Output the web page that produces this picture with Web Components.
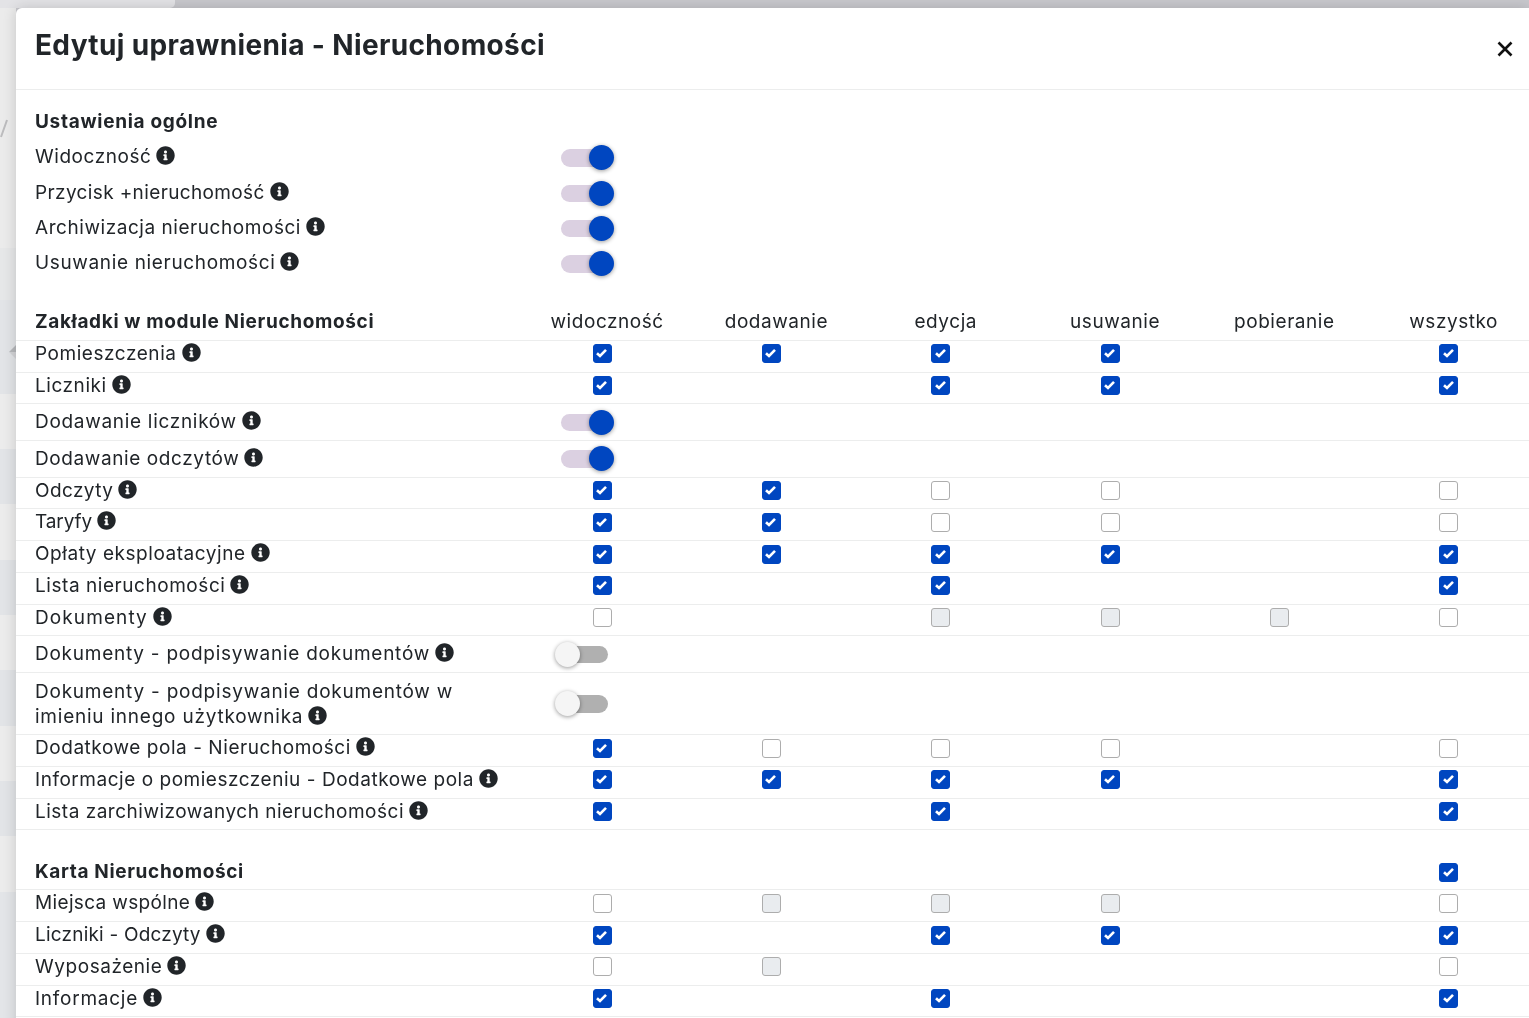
<!DOCTYPE html>
<html lang="pl">
<head>
<meta charset="utf-8">
<title>Edytuj uprawnienia</title>
<style>
  html, body { margin: 0; height: 100%; overflow: hidden; background: #c8c8cd; }
  body { font-family: Inter, "Liberation Sans", sans-serif; font-size: 19px; letter-spacing: .55px; color: #212529; }
</style>
</head>
<body>
<page-backdrop></page-backdrop>
<edit-modal>
  <span slot="title">Edytuj uprawnienia - Nieruchomości</span>

  <section-title>Ustawienia ogólne</section-title>
  <perm-row plain toggle="on">Widoczność</perm-row>
  <perm-row plain toggle="on" style="letter-spacing:.37px">Przycisk +nieruchomość</perm-row>
  <perm-row plain toggle="on">Archiwizacja nieruchomości</perm-row>
  <perm-row plain toggle="on" style="letter-spacing:.65px">Usuwanie nieruchomości</perm-row>

  <perm-row head style="margin-top:22.4px" titles="widoczność dodawanie edycja usuwanie pobieranie wszystko">Zakładki w module Nieruchomości</perm-row>
  <perm-row cells="c c c c - c">Pomieszczenia</perm-row>
  <perm-row cells="c - c c - c">Liczniki</perm-row>
  <perm-row toggle="on" style="letter-spacing:.7px">Dodawanie liczników</perm-row>
  <perm-row toggle="on" style="letter-spacing:.6px">Dodawanie odczytów</perm-row>
  <perm-row cells="c c u u - u" style="letter-spacing:.4px">Odczyty</perm-row>
  <perm-row cells="c c u u - u" style="letter-spacing:-.1px">Taryfy</perm-row>
  <perm-row cells="c c c c - c">Opłaty eksploatacyjne</perm-row>
  <perm-row cells="c - c - - c">Lista nieruchomości</perm-row>
  <perm-row cells="u - d d d u" style="letter-spacing:1.1px">Dokumenty</perm-row>
  <perm-row toggle="off" style="letter-spacing:.75px">Dokumenty - podpisywanie dokumentów</perm-row>
  <perm-row toggle="off" tall style="letter-spacing:.77px">Dokumenty - podpisywanie dokumentów w<br>imieniu innego użytkownika</perm-row>
  <perm-row cells="c u u u - u">Dodatkowe pola - Nieruchomości</perm-row>
  <perm-row cells="c c c c - c" style="letter-spacing:.53px">Informacje o pomieszczeniu - Dodatkowe pola</perm-row>
  <perm-row cells="c - c - - c" style="letter-spacing:.5px">Lista zarchiwizowanych nieruchomości</perm-row>

  <perm-row head style="margin-top:23px" cells="- - - - - c">Karta Nieruchomości</perm-row>
  <perm-row cells="u d d d - u" style="letter-spacing:.35px">Miejsca wspólne</perm-row>
  <perm-row cells="c - c c - c" style="letter-spacing:.2px">Liczniki - Odczyty</perm-row>
  <perm-row cells="u d - - - u">Wyposażenie</perm-row>
  <perm-row cells="c - c - - c" style="letter-spacing:.75px">Informacje</perm-row>
</edit-modal>

<script>
(function() {
  'use strict';

  const INFO_PATH = 'M256 8C119.043 8 8 119.083 8 256c0 136.997 111.043 248 248 248s248-111.003 248-248C504 119.083 392.957 8 256 8zm0 110c23.196 0 42 18.804 42 42s-18.804 42-42 42-42-18.804-42-42 18.804-42 42-42zm56 254c0 6.627-5.373 12-12 12h-88c-6.627 0-12-5.373-12-12v-24c0-6.627 5.373-12 12-12h12v-64h-12c-6.627 0-12-5.373-12-12v-24c0-6.627 5.373-12 12-12h64c6.627 0 12 5.373 12 12v100h12c6.627 0 12 5.373 12 12v24z';

  // the dimmed page behind the modal, only its left and top edges are visible
  customElements.define('page-backdrop', class extends HTMLElement {
    constructor() {
      super();
      this.attachShadow({mode: 'open'});
      this.shadowRoot.innerHTML = `
      <style>
      :host { position: fixed; inset: 0; display: block; overflow: hidden; }
      .bands { position: absolute; left: 0; top: 0; width: 16px; height: 100%; background: linear-gradient(#ebebeb 0 248px, #e6e7e8 248px 300px, #e2e4e7 300px 394px, #ececec 394px 449px, #e2e4e7 449px 504px, #ececec 504px 560px, #e2e4e7 560px 615px, #ececec 615px 670px, #e2e4e7 670px 726px, #ececec 726px 781px, #e2e4e7 781px 836px, #ececec 836px 892px, #e3e5e8 892px); }
      .card { position: absolute; left: 0; top: -10px; width: 175px; height: 18px; background: #e3e3e6; border-radius: 0 0 5px 0; }
      svg { position: absolute; left: 0; top: 119px; }
      .sort { position: absolute; left: 9px; top: 345px; width: 7px; height: 14px; background: linear-gradient(#b6b8bb 50%, #d2d3d6 50%); clip-path: polygon(100% 0, 0 50%, 100% 100%); }
      </style>
      <div class="bands"></div>
      <div class="card"></div>
      <div class="sort"></div>
      <svg width="8" height="20" viewBox="0 0 8 20"><path d="M7 1 1 18" stroke="#bcbcbe" stroke-width="2" fill="none"/></svg>`;
    }
  });

  customElements.define('edit-modal', class extends HTMLElement {
    constructor() {
      super();
      this.attachShadow({mode: 'open'});
      this.shadowRoot.innerHTML = `
      <style>
      :host { display: block; position: relative; margin: 8px 0 0 16px; background: #fff; border-radius: 6px 0 0 0; box-shadow: 0 0 14px rgba(0, 0, 0, .16); overflow: hidden; height: 1100px; }
      header { display: flex; align-items: center; justify-content: space-between; height: 81px; border-bottom: 1px solid #eceded; padding: 0 16px 0 19px; }
      h1 { margin: 0 0 6px; font-size: 28px; font-weight: 700; letter-spacing: .36px; line-height: 1.2; color: #212529; }
      svg { display: block; }
      </style>
      <header>
        <h1><slot name="title"></slot></h1>
        <svg width="16" height="16" viewBox="0 0 16 16"><path d="M1.5 1.5l13 13M14.5 1.5l-13 13" stroke="#111" stroke-width="2.6" fill="none"/></svg>
      </header>
      <slot></slot>`;
    }
  });

  customElements.define('section-title', class extends HTMLElement {
    constructor() {
      super();
      this.attachShadow({mode: 'open'});
      this.shadowRoot.innerHTML = `
      <style>
      :host { display: flex; align-items: center; height: 38px; margin-top: 12px; padding-left: 19px; font-weight: 700; letter-spacing: .7px; }
      </style>
      <slot></slot>`;
    }
  });

  customElements.define('info-icon', class extends HTMLElement {
    constructor() {
      super();
      this.attachShadow({mode: 'open'});
      this.shadowRoot.innerHTML = `
      <style>
      :host { display: inline-block; width: 19px; height: 19px; margin-left: 5px; vertical-align: -2px; }
      svg { display: block; }
      </style>
      <svg width="19" height="19" viewBox="0 0 512 512"><path fill="#212529" d="${INFO_PATH}"/></svg>`;
    }
  });

  customElements.define('perm-check', class extends HTMLElement {
    constructor() {
      super();
      this.attachShadow({mode: 'open'});
      this.shadowRoot.innerHTML = `
      <style>
      :host { display: block; box-sizing: border-box; width: 19px; height: 19px; border-radius: 3px; border: 1.5px solid #adadad; background: #fff; }
      :host([state=c]) { background: #0046c0; border-color: #0046c0; }
      :host([state=d]) { background: #e9ecef; }
      svg { display: none; margin: 3px 0 0 2.5px; }
      :host([state=c]) svg { display: block; }
      </style>
      <svg width="11" height="10" viewBox="0 0 11 10"><path d="M1 5.2 4 8 10 1.8" stroke="#fff" stroke-width="2.6" fill="none"/></svg>`;
    }
  });

  customElements.define('perm-switch', class extends HTMLElement {
    constructor() {
      super();
      this.attachShadow({mode: 'open'});
      this.shadowRoot.innerHTML = `
      <style>
      :host { display: block; position: relative; width: 59px; height: 25px; }
      .track { position: absolute; left: 6px; top: 4px; width: 47px; height: 17.5px; border-radius: 9px; background: #b0b0b0; }
      .knob { position: absolute; left: 0; top: 0; width: 25px; height: 25px; border-radius: 50%; background: #f5f5f5; box-shadow: 0 1px 4px rgba(0, 0, 0, .4); }
      :host([on]) .track { background: #dbd0e1; }
      :host([on]) .knob { left: 34px; background: #0046c0; }
      </style>
      <div class="track"></div><div class="knob"></div>`;
    }
  });

  // one row of the table: label in the slot, then six columns of checks or one switch
  customElements.define('perm-row', class extends HTMLElement {
    constructor() {
      super();
      this.attachShadow({mode: 'open'});
    }
    connectedCallback() {
      const head = this.hasAttribute('head');
      let cols = '';
      if (this.hasAttribute('titles')) {
        cols = this.getAttribute('titles').split(' ').map(t => `<div class="col title">${t}</div>`).join('');
      } else if (this.hasAttribute('toggle')) {
        const on = this.getAttribute('toggle') === 'on' ? ' on' : '';
        cols = `<div class="col switch"><perm-switch${on}></perm-switch></div>`;
      } else if (this.hasAttribute('cells')) {
        cols = this.getAttribute('cells').split(' ').map(c => {
          if (c === '-') return '<div class="col"></div>';
          return `<div class="col box"><perm-check state="${c}"></perm-check></div>`;
        }).join('');
      }
      this.shadowRoot.innerHTML = `
      <style>
      :host { display: grid; grid-template-columns: 506.5px repeat(6, 169.3px); align-items: center; box-sizing: border-box; height: 31.75px; border-bottom: 1px solid #eceded; padding-bottom: 5px; }
      :host([toggle]) { height: 36.6px; padding-bottom: 0; }
      :host([tall]) { height: 62.2px; }
      :host([plain]) { height: 35.4px; border-bottom: 0; }
      :host([head]) { height: 37px; padding-bottom: 0; }
      .label { padding-left: 19px; line-height: 25px; margin-top: -1px; }
      :host([toggle]) .label { margin-top: -1px; }
      :host([plain]) .label { margin-top: -2px; }
      :host([tall]) .label { margin-top: 0; }
      :host([head]) .label { margin-top: 0; font-weight: 700; letter-spacing: .65px; }
      :host([head]) .box { margin-top: 2px; }
      .col { display: flex; justify-content: center; padding-right: 10px; }
      .title { padding: 0; font-weight: 400; }
      .switch { grid-column: 2 / span 2; justify-content: flex-start; padding: 0 0 0 32.5px; }
      </style>
      <div class="label"><slot></slot>${head ? '' : '<info-icon></info-icon>'}</div>
      ${cols}`;
    }
  });
}());
</script>
</body>
</html>
